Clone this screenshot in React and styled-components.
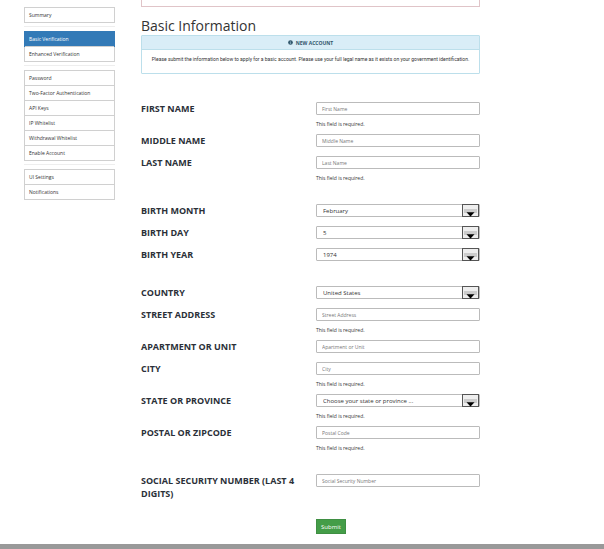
import React, { useState } from 'react';
import styled, { createGlobalStyle } from 'styled-components';

const GlobalStyle = createGlobalStyle`
  * {
    box-sizing: border-box;
  }
  body {
    margin: 0;
    background: #fff;
    color: #333;
    font: 5px/8px 'Open Sans', 'Noto Sans', sans-serif;
  }
`;

const Page = styled.div`
  display: grid;
  grid-template-columns: 91px minmax(0, 1fr);
  column-gap: 26px;
  padding: 0 124px 6px 24px;
`;

const Sidebar = styled.nav`
  padding-top: 7px;
`;

const NavGroup = styled.ul`
  list-style: none;
  margin: 0;
  padding: 0;
  border: 1px solid #d0d0d0;
`;

const NavDivider = styled.hr`
  height: 1px;
  margin: 3px 0 4px;
  border: 0;
  background: #eee;
`;

const NavItem = styled.li`
  & + & {
    border-top: 1px solid #d0d0d0;
  }
`;

const NavLink = styled.a`
  display: block;
  margin: ${({ $active }) => ($active ? '-1px' : '0')};
  padding: ${({ $active }) => ($active ? '4px 5px' : '3px 4px')};
  background: ${({ $active }) => ($active ? '#337ab7' : '#fff')};
  color: ${({ $active }) => ($active ? '#fff' : '#333')};
  text-decoration: none;
`;

const Main = styled.main`
  min-width: 0;
`;

const Alert = styled.div`
  height: 7px;
  border: 1px solid #e0c4c8;
  border-top: 0;
`;

const Title = styled.h1`
  margin: 9px 0 0;
  font-size: 14px;
  line-height: 19px;
  font-weight: 400;
`;

const Panel = styled.section`
  border: 1px solid #bcdfeb;
  border-radius: 1px;
`;

const PanelHeading = styled.h2`
  display: flex;
  align-items: center;
  justify-content: center;
  gap: 3px;
  margin: 0;
  height: 14px;
  background: #d9edf7;
  border-bottom: 1px solid #bcdfeb;
  color: #31566b;
  font-size: 5px;
  font-weight: 700;
`;

const PanelBody = styled.p`
  margin: 0;
  padding: 5px 4px 10px;
  font-family: Roboto, sans-serif;
  text-align: center;
`;

const Form = styled.form`
  padding-top: 28px;
`;

const FieldGroup = styled.div`
  margin-bottom: 16px;
`;

const Row = styled.div`
  display: grid;
  grid-template-columns: 175fr 164fr;
  min-height: 22px;
`;

const Label = styled.label`
  padding-right: 16px;
  font-size: 9px;
  line-height: 13px;
  font-weight: 700;
  color: #2b3038;
`;

const Input = styled.input`
  display: block;
  width: 100%;
  height: 13px;
  padding: 0 5px;
  border: 1px solid #bbb;
  border-radius: 1px;
  background: #fff;
  color: #333;
  font: inherit;
  &::placeholder {
    color: #777;
    opacity: 1;
  }
`;

const SelectBox = styled.div`
  position: relative;
  svg {
    position: absolute;
    top: 0;
    right: 1px;
    pointer-events: none;
  }
`;

const SelectInput = styled(Input)`
  appearance: none;
  padding: 0 18px 0 6px;
  font-size: 6px;
`;

const Help = styled.p`
  margin: 0;
  padding: 5px 0 6px;
`;

const SubmitRow = styled(Row)`
  padding-top: 3px;
`;

const SubmitButton = styled.button`
  grid-column: 2;
  justify-self: start;
  width: 30px;
  height: 15px;
  padding: 0;
  border: 1px solid #3f8f43;
  background: #449d48;
  color: #fff;
  font: inherit;
  font-size: 6px;
  cursor: pointer;
`;

const Footer = styled.footer`
  height: 5px;
  background: #999;
`;

const navGroups = [
  ['Summary'],
  ['Basic Verification', 'Enhanced Verification'],
  [
    'Password',
    'Two-Factor Authentication',
    'API Keys',
    'IP Whitelist',
    'Withdrawal Whitelist',
    'Enable Account',
  ],
  ['UI Settings', 'Notifications'],
];

const fieldGroups = [
  [
    { id: 'first', label: 'FIRST NAME', placeholder: 'First Name', required: true },
    { id: 'middle', label: 'MIDDLE NAME', placeholder: 'Middle Name' },
    { id: 'last', label: 'LAST NAME', placeholder: 'Last Name', required: true },
  ],
  [
    { id: 'month', label: 'BIRTH MONTH', options: ['February', 'March', 'April'] },
    { id: 'day', label: 'BIRTH DAY', options: ['5', '6', '7'] },
    { id: 'year', label: 'BIRTH YEAR', options: ['1974', '1975', '1976'] },
  ],
  [
    { id: 'country', label: 'COUNTRY', options: ['United States', 'Canada'] },
    { id: 'street', label: 'STREET ADDRESS', placeholder: 'Street Address', required: true },
    { id: 'unit', label: 'APARTMENT OR UNIT', placeholder: 'Apartment or Unit' },
    { id: 'city', label: 'CITY', placeholder: 'City', required: true },
    {
      id: 'state',
      label: 'STATE OR PROVINCE',
      options: ['Choose your state or province ...'],
      required: true,
    },
    { id: 'zip', label: 'POSTAL OR ZIPCODE', placeholder: 'Postal Code', required: true },
  ],
  [
    {
      id: 'ssn',
      label: 'SOCIAL SECURITY NUMBER (LAST 4 DIGITS)',
      placeholder: 'Social Security Number',
    },
  ],
];

const InfoIcon = () => (
  <svg width="5" height="5" viewBox="0 0 10 10" aria-hidden="true">
    <circle cx="5" cy="5" r="4.7" fill="#31566b" />
    <path d="M4.3 2h1.5v1.3H4.3zM3.8 4.2h2v3h.7v.9H3.7v-.9h.6V5.1h-.5z" fill="#7fa5b8" />
  </svg>
);

const ArrowIcon = () => (
  <svg width="17" height="13" viewBox="0 0 17 13" aria-hidden="true">
    <rect x="0.5" y="0.5" width="16" height="12" fill="#eee" stroke="#555" />
    <path d="M2 5h13v4H2z" fill="#ccc" />
    <path d="M4.5 8.3h8L8.5 12.4z" fill="#000" />
  </svg>
);

function Field({ id, label, placeholder, options, required }) {
  return (
    <Row>
      <Label htmlFor={id}>{label}</Label>
      <div>
        {options ? (
          <SelectBox>
            <SelectInput as="select" id={id}>
              {options.map((option) => (
                <option key={option}>{option}</option>
              ))}
            </SelectInput>
            <ArrowIcon />
          </SelectBox>
        ) : (
          <Input type="text" id={id} placeholder={placeholder} />
        )}
        {required && <Help>This field is required.</Help>}
      </div>
    </Row>
  );
}

export default function App() {
  const [active, setActive] = useState('Basic Verification');

  return (
    <>
      <GlobalStyle />
      <Page>
        <Sidebar>
          {navGroups.map((group, i) => (
            <React.Fragment key={group[0]}>
              {i > 0 && <NavDivider />}
              <NavGroup>
                {group.map((item) => (
                  <NavItem key={item}>
                    <NavLink
                      href="#"
                      $active={item === active}
                      onClick={() => setActive(item)}
                    >
                      {item}
                    </NavLink>
                  </NavItem>
                ))}
              </NavGroup>
            </React.Fragment>
          ))}
        </Sidebar>
        <Main>
          <Alert />
          <Title>Basic Information</Title>
          <Panel>
            <PanelHeading>
              <InfoIcon />
              NEW ACCOUNT
            </PanelHeading>
            <PanelBody>
              Please submit the information below to apply for a basic account.
              Please use your full legal name as it exists on your government
              identification.
            </PanelBody>
          </Panel>
          <Form onSubmit={(e) => e.preventDefault()}>
            {fieldGroups.map((group) => (
              <FieldGroup key={group[0].id}>
                {group.map((field) => (
                  <Field key={field.id} {...field} />
                ))}
              </FieldGroup>
            ))}
            <SubmitRow>
              <SubmitButton type="submit">Submit</SubmitButton>
            </SubmitRow>
          </Form>
        </Main>
      </Page>
      <Footer />
    </>
  );
}
